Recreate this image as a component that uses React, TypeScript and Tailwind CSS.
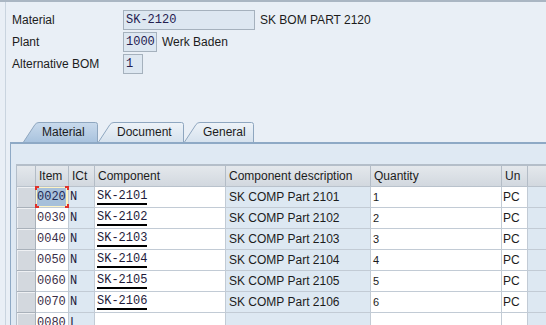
import React from "react";

const sans = "font-['Liberation_Sans',Arial,sans-serif]";
const mono = "font-['Liberation_Mono','Courier_New',monospace]";

const rows = [
  { item: "0020", ict: "N", comp: "SK-2101", desc: "SK COMP Part 2101", qty: "1", un: "PC" },
  { item: "0030", ict: "N", comp: "SK-2102", desc: "SK COMP Part 2102", qty: "2", un: "PC" },
  { item: "0040", ict: "N", comp: "SK-2103", desc: "SK COMP Part 2103", qty: "3", un: "PC" },
  { item: "0050", ict: "N", comp: "SK-2104", desc: "SK COMP Part 2104", qty: "4", un: "PC" },
  { item: "0060", ict: "N", comp: "SK-2105", desc: "SK COMP Part 2105", qty: "5", un: "PC" },
  { item: "0070", ict: "N", comp: "SK-2106", desc: "SK COMP Part 2106", qty: "6", un: "PC" },
  { item: "0080", ict: "L", comp: "", desc: "", qty: "", un: "" },
];

// Tab with slanted left edge, drawn as a shape behind the label
const Tab = ({ label, active, w }: { label: string; active?: boolean; w: number }) => (
  <div className="relative h-[20px] flex items-center" style={{ width: w }}>
    <svg className="absolute inset-0" width={w} height={20}>
      <defs>
        <linearGradient id={"g" + label} x1="0" y1="0" x2="0" y2="1">
          <stop offset="0" stopColor={active ? "#c9daec" : "#eef3f8"} />
          <stop offset="1" stopColor={active ? "#a9c3de" : "#d6e2ee"} />
        </linearGradient>
      </defs>
      <path
        d={`M0.5 20 L12 2.5 Q13.5 0.5 16 0.5 L${w - 2.5} 0.5 Q${w - 0.5} 0.5 ${w - 0.5} 2.5 L${w - 0.5} 20`}
        fill={`url(#g${label})`}
        stroke="#8ea6bf"
      />
    </svg>
    <span className={`relative pl-[19px] text-[12px] text-[#1c1c1c] ${sans}`}>{label}</span>
  </div>
);

const Field = ({ w, children }: { w: number; children?: React.ReactNode }) => (
  <div
    className={`h-[20px] border border-[#a5b1bd] bg-[#dde7f1] px-[2px] flex items-center text-[12px] text-[#242050] ${mono}`}
    style={{ width: w }}
  >
    {children}
  </div>
);

const Sel = () => (
  <div className="w-[19px] shrink-0 border-r border-b border-[#a9b1ba] bg-[#d3d8de] shadow-[inset_1px_1px_0_#eef0f3]" />
);

export default function App() {
  return (
    <div className={`w-[546px] h-[325px] overflow-hidden bg-[#e9eff6] border-t-2 border-[#aab6c3] ${sans}`}>
      <div className="ml-[5px] h-full border-l border-[#c9d4df] flex flex-col">
        {/* header fields */}
        <div className="pt-[8px] pl-[6px] flex flex-col gap-[2px] text-[12px] text-[#1c1c1c]">
          <div className="flex items-center h-[20px]">
            <span className="w-[111px]">Material</span>
            <Field w={132}>SK-2120</Field>
            <span className="ml-[5px]">SK BOM PART 2120</span>
          </div>
          <div className="flex items-center h-[20px]">
            <span className="w-[111px]">Plant</span>
            <Field w={34}>1000</Field>
            <span className="ml-[5px]">Werk Baden</span>
          </div>
          <div className="flex items-center h-[20px]">
            <span className="w-[111px]">Alternative BOM</span>
            <Field w={20}>1</Field>
          </div>
        </div>

        {/* tabs */}
        <div className="mt-[48px] pl-[17px] flex">
          <Tab label="Material" active w={75} />
          <Tab label="Document" w={86} />
          <Tab label="General" w={70} />
        </div>

        <div className="flex-1 ml-[4px] border-l border-t-2 border-[#8ea9c5] bg-[#dfe9f3] pt-[20px] pl-[5px]">
          {/* table */}
          <div className="border-l border-t-2 border-[#b4bec9] bg-[#dde8f2] text-[12px] text-[#1c1c1c]">
            <div className="flex h-[21px] border-b border-[#b9c2cc] bg-gradient-to-b from-[#e4e8ec] to-[#d2d8df]">
              <div className="w-[19px] border-r border-[#b3bcc6]" />
              {[
                ["Item", 33],
                ["ICt", 26],
                ["Component", 131],
                ["Component description", 145],
                ["Quantity", 131],
                ["Un", 26],
              ].map(([t, w]) => (
                <div
                  key={t as string}
                  className="border-r border-[#b3bcc6] pl-[3px] flex items-center"
                  style={{ width: w as number }}
                >
                  {t}
                </div>
              ))}
              <div className="flex-1" />
            </div>
            {rows.map((r, i) => (
              <div key={r.item} className="flex h-[21px]">
                <Sel />
                <div
                  className={`relative w-[33px] border-r border-b border-[#c2cbd5] flex items-center pl-[1px] text-[#3b2f48] ${mono} ${
                    i === 0 ? "bg-[#fdf3c4]" : "bg-white"
                  }`}
                >
                  {i === 0 ? (
                    <>
                      <span className="bg-[#a7c0da] text-[#1f2a55]">{r.item}</span>
                      <span className="absolute -left-px -top-px w-[4px] h-[4px] border-l-2 border-t-2 border-[#e0312b]" />
                      <span className="absolute -right-px -top-px w-[4px] h-[4px] border-r-2 border-t-2 border-[#e0312b]" />
                      <span className="absolute -left-px -bottom-px w-[4px] h-[4px] border-l-2 border-b-2 border-[#e0312b]" />
                      <span className="absolute -right-px -bottom-px w-[4px] h-[4px] border-r-2 border-b-2 border-[#e0312b]" />
                    </>
                  ) : (
                    r.item
                  )}
                </div>
                <div className={`w-[26px] border-r border-b border-[#c2cbd5] flex items-center pl-[1px] text-[#241c3c] ${mono}`}>
                  {r.ict}
                </div>
                <div className={`w-[131px] border-r border-b border-[#c2cbd5] bg-white flex items-center pl-[2px] text-[#1e1a3a] ${mono}`}>
                  {r.comp && (
                    <span className="border-b-2 border-black leading-[13px]">{r.comp}</span>
                  )}
                </div>
                <div className="w-[145px] border-r border-b border-[#c2cbd5] flex items-center pl-[3px]">{r.desc}</div>
                <div className="w-[131px] border-r border-b border-[#c2cbd5] bg-white flex items-center pl-[2px] text-[11px]">
                  {r.qty}
                </div>
                <div className="w-[26px] border-r border-b border-[#c2cbd5] bg-white flex items-center pl-[1px]">{r.un}</div>
                <div className="flex-1 border-b border-[#c2cbd5]" />
              </div>
            ))}
          </div>
        </div>
      </div>
    </div>
  );
}
